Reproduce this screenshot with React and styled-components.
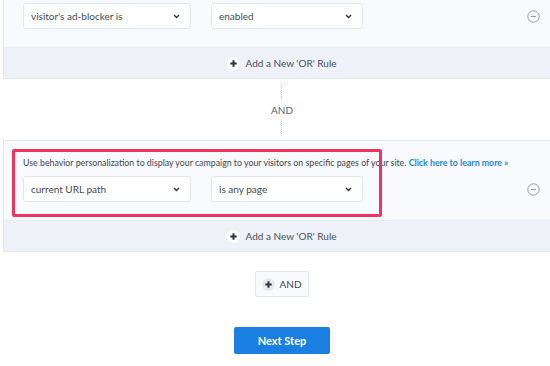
import React from 'react';
import styled, { createGlobalStyle } from 'styled-components';

const GlobalStyle = createGlobalStyle`
    html, body {
        margin: 0;
        padding: 0;
        background: #ffffff;
        overflow: hidden;
    }
    body {
        font-family: Lato, "Open Sans", Arial, sans-serif;
        color: #4a4f5a;
    }
`;

const Page = styled.div`
    width: 558px;
    margin-left: 3px;
    display: flex;
    flex-direction: column;
    align-items: center;
`;

const Card = styled.div`
    position: relative;
    width: 100%;
    box-sizing: border-box;
    border: 1px solid #e4e8f0;
    background: #f9fafd;
    margin-top: ${(p) => p.$offset || 0}px;
`;

const CardBody = styled.div`
    display: flex;
    flex-direction: column;
    gap: 7px;
    padding: ${(p) => p.$top}px 0 18px 19px;
`;

const Note = styled.p`
    margin: 0;
    font-size: 8.8px;
    line-height: 12px;
    color: #3f4450;
    white-space: nowrap;
    a {
        color: #1d86e0;
        font-weight: 700;
        text-decoration: none;
    }
`;

const Row = styled.div`
    display: flex;
    align-items: center;
    gap: 20px;
`;

const Select = styled.div`
    width: ${(p) => p.$width}px;
    height: 26px;
    box-sizing: border-box;
    display: flex;
    align-items: center;
    justify-content: space-between;
    padding: 0 10px 0 7px;
    background: #ffffff;
    border: 1px solid #e3e7ef;
    border-radius: 3px;
    font-size: 10px;
    color: #444a55;
`;

const RemoveButton = styled.span`
    margin-left: auto;
    margin-right: 20px;
    display: flex;
`;

const Footer = styled.div`
    height: 30px;
    display: flex;
    align-items: center;
    justify-content: center;
    gap: 5px;
    background: #eef1f8;
    border-top: 1px solid #e8ebf3;
    font-size: 10px;
    color: #4a4f5a;
`;

const PlusDot = styled.span`
    width: 13px;
    height: 13px;
    border-radius: 50%;
    background: ${(p) => p.$bg};
    display: flex;
    align-items: center;
    justify-content: center;
`;

const Connector = styled.div`
    display: flex;
    flex-direction: column;
    align-items: center;
    gap: 5px;
    padding: 5px 0 4px;
    font-size: 10px;
    color: #5b606b;
`;

const Dots = styled.span`
    width: 0;
    height: 15px;
    border-left: 1px dotted #c3c8d2;
`;

const Highlight = styled.div`
    position: absolute;
    left: 8px;
    top: 8px;
    width: 370px;
    height: 68px;
    box-sizing: border-box;
    border: 3px solid #f2325f;
    border-radius: 2px;
    pointer-events: none;
`;

const AndButton = styled.div`
    margin-top: 19px;
    width: 54px;
    height: 26px;
    box-sizing: border-box;
    display: flex;
    align-items: center;
    justify-content: center;
    gap: 4px;
    border: 1px solid #e3e7ef;
    border-radius: 2px;
    background: #f9fafd;
    font-size: 10px;
    color: #3f4450;
`;

const NextButton = styled.button`
    margin-top: 30px;
    width: 96px;
    height: 27px;
    border: none;
    border-radius: 2px;
    background: #1b7fe2;
    color: #ffffff;
    font-family: Lato, "Open Sans", Arial, sans-serif;
    font-size: 11px;
    font-weight: 700;
`;

const Chevron = () => (
    <svg width="7" height="5" viewBox="0 0 7 5">
        <path d="M1 1 L3.5 3.5 L6 1" fill="none" stroke="#333" strokeWidth="1.4" />
    </svg>
);

const Plus = () => (
    <svg width="7" height="7" viewBox="0 0 7 7">
        <path d="M3.5 0.3 V6.7 M0.3 3.5 H6.7" stroke="#2f333b" strokeWidth="2" />
    </svg>
);

const MinusCircle = () => (
    <svg width="13" height="13" viewBox="0 0 13 13">
        <circle cx="6.5" cy="6.5" r="5.7" fill="none" stroke="#9a9ea8" strokeWidth="1" />
        <path d="M4 6.5 H9" stroke="#9a9ea8" strokeWidth="1.2" />
    </svg>
);

const RuleRow = ({ left, right }) => (
    <Row>
        <Select $width={168}>
            {left}
            <Chevron />
        </Select>
        <Select $width={152}>
            {right}
            <Chevron />
        </Select>
        <RemoveButton>
            <MinusCircle />
        </RemoveButton>
    </Row>
);

const AddOr = () => (
    <Footer>
        <PlusDot $bg="#ffffff">
            <Plus />
        </PlusDot>
        Add a New 'OR' Rule
    </Footer>
);

export default function App() {
    return (
        <Page>
            <GlobalStyle />
            <Card $offset={-20}>
                <CardBody $top={22}>
                    <RuleRow left="visitor's ad-blocker is" right="enabled" />
                </CardBody>
                <AddOr />
            </Card>
            <Connector>
                <Dots />
                AND
                <Dots />
            </Connector>
            <Card>
                <CardBody $top={16}>
                    <Note>
                        Use behavior personalization to display your campaign to your visitors on specific pages of your site.{' '}
                        <a href="#learn">Click here to learn more »</a>
                    </Note>
                    <RuleRow left="current URL path" right="is any page" />
                </CardBody>
                <AddOr />
                <Highlight />
            </Card>
            <AndButton>
                <PlusDot $bg="#e6e9f0">
                    <Plus />
                </PlusDot>
                AND
            </AndButton>
            <NextButton>Next Step</NextButton>
        </Page>
    );
}
